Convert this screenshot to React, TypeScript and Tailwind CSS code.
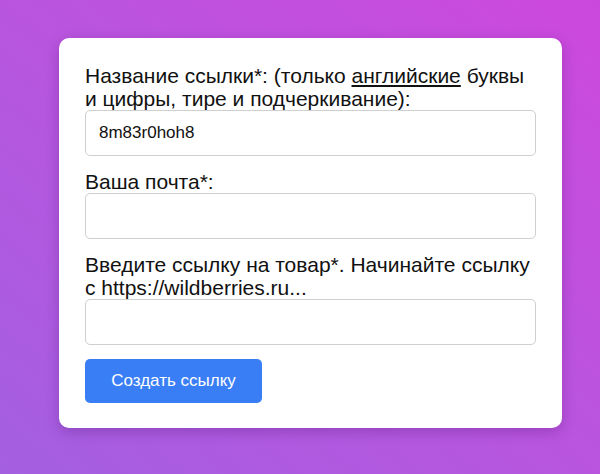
import { useState } from "react";

const font = { fontFamily: '"Liberation Sans", Arial, sans-serif' };

export default function App() {
  const [slug, setSlug] = useState("8m83r0hoh8");
  const [email, setEmail] = useState("");
  const [url, setUrl] = useState("");

  return (
    <div
      className="h-[474px] w-[600px] overflow-hidden bg-linear-to-tr from-[#a45fe1] to-[#cc48dc] pl-[59px] pt-[38px]"
      style={font}
    >
      <form
        className="flex w-[503px] flex-col rounded-[10px] bg-white px-[26px] pb-[25px] pt-[26px] text-[#111] shadow-[0_4px_14px_rgba(60,0,90,0.25)]"
        onSubmit={(e) => e.preventDefault()}
      >
        <label className="text-[21px] leading-[23px]">
          Название ссылки*: (только <span className="underline">английские</span> буквы и цифры, тире и
          подчеркивание):
        </label>
        <input
          value={slug}
          onChange={(e) => setSlug(e.target.value)}
          className="h-[46px] w-full rounded-[5px] border border-[#cfcfcf] px-[13px] text-[17px] text-[#111] outline-none"
        />

        <label className="mt-[14px] text-[21px] leading-[23px]">Ваша почта*:</label>
        <input
          value={email}
          onChange={(e) => setEmail(e.target.value)}
          className="h-[46px] w-full rounded-[5px] border border-[#cfcfcf] px-[13px] text-[17px] outline-none"
        />

        <label className="mt-[14px] text-[21px] leading-[23px]">
          Введите ссылку на товар*. Начинайте ссылку с https://wildberries.ru...
        </label>
        <input
          value={url}
          onChange={(e) => setUrl(e.target.value)}
          className="h-[46px] w-full rounded-[5px] border border-[#cfcfcf] px-[13px] text-[17px] outline-none"
        />

        <button
          type="submit"
          className="mt-[14px] h-[44px] w-[177px] rounded-[5px] bg-[#3a7ef6] text-[17px] text-white"
        >
          Создать ссылку
        </button>
      </form>
    </div>
  );
}
